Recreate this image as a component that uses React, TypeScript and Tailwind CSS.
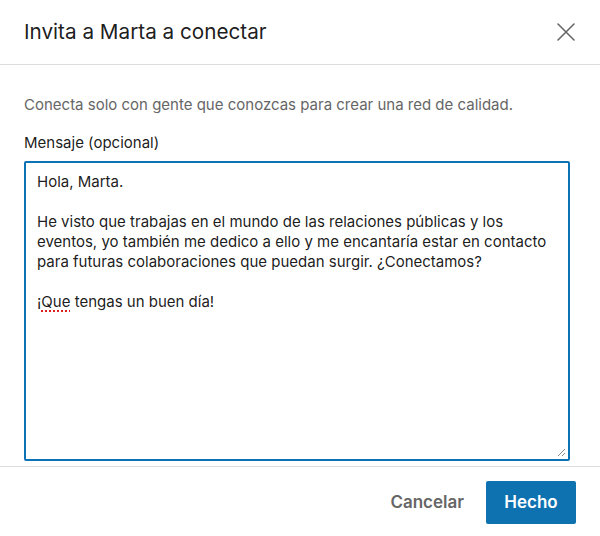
import React from "react";

const FONT = { fontFamily: 'Inter, "Liberation Sans", Arial, sans-serif' };

function CloseIcon() {
  return (
    <svg aria-hidden viewBox="0 0 20 20" className="size-5" fill="none" stroke="currentColor" strokeWidth="1.6" strokeLinecap="round">
      <path d="M2 2l16 16M18 2L2 18" />
    </svg>
  );
}

function ResizeGrip() {
  return (
    <svg aria-hidden viewBox="0 0 10 10" className="absolute bottom-[2px] right-[2px] size-[10px]" stroke="#8a8a8a" strokeWidth="1">
      <path d="M9 2L2 9M9 6L6 9" />
    </svg>
  );
}

export default function App() {
  return (
    <div className="flex h-[536px] w-[600px] flex-col bg-white text-[rgba(0,0,0,0.9)]" style={FONT}>
      <header className="flex h-[65px] shrink-0 items-center justify-between border-b border-[#dcdcdc] pl-6 pr-[24px]">
        <h2 className="text-[20.7px] font-normal leading-none">Invita a Marta a conectar</h2>
        <button type="button" aria-label="Cerrar" className="text-[#666]">
          <CloseIcon />
        </button>
      </header>

      <div className="flex flex-col px-6 pt-[30px]">
        <p className="text-[15px] leading-[20px] text-[#666]">
          Conecta solo con gente que conozcas para crear una red de calidad.
        </p>
        <label className="mt-[18px] text-[15px] leading-[20px]">Mensaje (opcional)</label>
        <div className="relative mt-[8px] h-[300px] w-[546px] rounded-[2px] border-2 border-[#0a72b5] px-[11px] pt-[9px] text-[15px] leading-[20px]">
          <p>Hola, Marta.</p>
          <p className="mt-[20px]">
            He visto que trabajas en el mundo de las relaciones públicas y los eventos, yo también me dedico a ello y me encantaría estar en contacto para futuras colaboraciones que puedan surgir. ¿Conectamos?
          </p>
          <p className="mt-[20px]">
            ¡<span className="underline decoration-[#e02020] decoration-dotted decoration-2 underline-offset-[3px]">Que</span> tengas un buen día!
          </p>
          <ResizeGrip />
        </div>
      </div>

      <footer className="mt-[5px] flex items-center justify-end gap-[22px] border-t border-[#dcdcdc] pr-6 pt-[14px]">
        <button type="button" className="text-[17px] font-semibold text-[#666]">Cancelar</button>
        <button type="button" className="h-[43px] w-[90px] rounded-[2px] bg-[#0e72b1] text-[17px] font-semibold text-white">
          Hecho
        </button>
      </footer>
    </div>
  );
}
